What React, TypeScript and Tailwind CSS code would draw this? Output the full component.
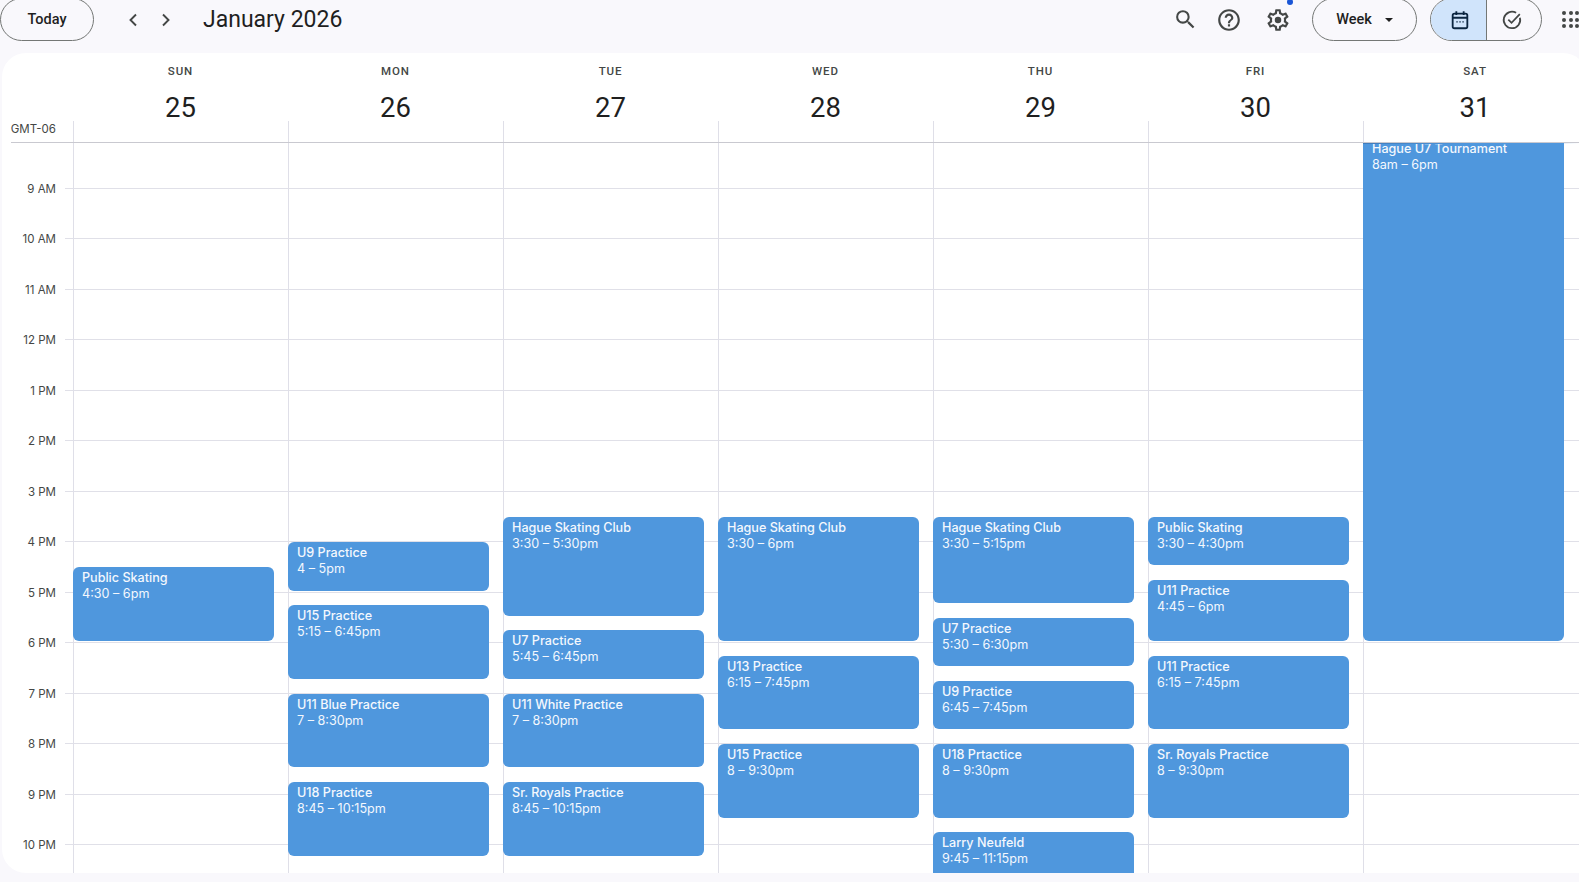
import React from "react";

const HOUR = 50.5;
const days = [
  ["SUN", "25"],
  ["MON", "26"],
  ["TUE", "27"],
  ["WED", "28"],
  ["THU", "29"],
  ["FRI", "30"],
  ["SAT", "31"],
];
const hourLabels = ["9 AM", "10 AM", "11 AM", "12 PM", "1 PM", "2 PM", "3 PM", "4 PM", "5 PM", "6 PM", "7 PM", "8 PM", "9 PM", "10 PM", "11 PM"];

type Ev = { d: number; s: number; e: number; t: string; w: string };
const events: Ev[] = [
  { d: 0, s: 16.5, e: 18, t: "Public Skating", w: "4:30 – 6pm" },
  { d: 1, s: 16, e: 17, t: "U9 Practice", w: "4 – 5pm" },
  { d: 1, s: 17.25, e: 18.75, t: "U15 Practice", w: "5:15 – 6:45pm" },
  { d: 1, s: 19, e: 20.5, t: "U11 Blue Practice", w: "7 – 8:30pm" },
  { d: 1, s: 20.75, e: 22.25, t: "U18 Practice", w: "8:45 – 10:15pm" },
  { d: 2, s: 15.5, e: 17.5, t: "Hague Skating Club", w: "3:30 – 5:30pm" },
  { d: 2, s: 17.75, e: 18.75, t: "U7 Practice", w: "5:45 – 6:45pm" },
  { d: 2, s: 19, e: 20.5, t: "U11 White Practice", w: "7 – 8:30pm" },
  { d: 2, s: 20.75, e: 22.25, t: "Sr. Royals Practice", w: "8:45 – 10:15pm" },
  { d: 3, s: 15.5, e: 18, t: "Hague Skating Club", w: "3:30 – 6pm" },
  { d: 3, s: 18.25, e: 19.75, t: "U13 Practice", w: "6:15 – 7:45pm" },
  { d: 3, s: 20, e: 21.5, t: "U15 Practice", w: "8 – 9:30pm" },
  { d: 4, s: 15.5, e: 17.25, t: "Hague Skating Club", w: "3:30 – 5:15pm" },
  { d: 4, s: 17.5, e: 18.5, t: "U7 Practice", w: "5:30 – 6:30pm" },
  { d: 4, s: 18.75, e: 19.75, t: "U9 Practice", w: "6:45 – 7:45pm" },
  { d: 4, s: 20, e: 21.5, t: "U18 Prtactice", w: "8 – 9:30pm" },
  { d: 4, s: 21.75, e: 23.25, t: "Larry Neufeld", w: "9:45 – 11:15pm" },
  { d: 5, s: 15.5, e: 16.5, t: "Public Skating", w: "3:30 – 4:30pm" },
  { d: 5, s: 16.75, e: 18, t: "U11 Practice", w: "4:45 – 6pm" },
  { d: 5, s: 18.25, e: 19.75, t: "U11 Practice", w: "6:15 – 7:45pm" },
  { d: 5, s: 20, e: 21.5, t: "Sr. Royals Practice", w: "8 – 9:30pm" },
  { d: 6, s: 8, e: 18, t: "Hague U7 Tournament", w: "8am – 6pm" },
];

const Mat = ({ d, size, className = "" }: { d: string; size: number; className?: string }) => (
  <svg width={size} height={size} viewBox="0 0 24 24" fill="currentColor" className={className}>
    <path d={d} />
  </svg>
);

const SEARCH = "M15.5 14h-.79l-.28-.27A6.471 6.471 0 0 0 16 9.5 6.5 6.5 0 1 0 9.5 16c1.61 0 3.09-.59 4.23-1.57l.27.28v.79l5 4.99L20.49 19l-4.99-5zm-6 0C7.01 14 5 11.99 5 9.5S7.01 5 9.5 5 14 7.01 14 9.5 11.99 14 9.5 14z";
const HELP = "M11 18h2v-2h-2v2zm1-16C6.48 2 2 6.48 2 12s4.48 10 10 10 10-4.48 10-10S17.52 2 12 2zm0 18c-4.41 0-8-3.59-8-8s3.59-8 8-8 8 3.59 8 8-3.59 8-8 8zm0-14c-2.21 0-4 1.79-4 4h2c0-1.1.9-2 2-2s2 .9 2 2c0 2-3 1.75-3 5h2c0-2.25 3-2.5 3-5 0-2.21-1.79-4-4-4z";
const GEAR = "M19.43 12.98c.04-.32.07-.64.07-.98 0-.34-.03-.66-.07-.98l2.11-1.65c.19-.15.24-.42.12-.64l-2-3.46c-.09-.16-.26-.25-.44-.25-.06 0-.12.01-.17.03l-2.49 1c-.52-.4-1.08-.73-1.69-.98l-.38-2.65C14.46 2.18 14.25 2 14 2h-4c-.25 0-.46.18-.49.42l-.38 2.65c-.61.25-1.17.59-1.69.98l-2.49-1c-.06-.02-.12-.03-.18-.03-.17 0-.34.09-.43.25l-2 3.46c-.13.22-.07.49.12.64l2.11 1.65c-.04.32-.07.65-.07.98 0 .33.03.66.07.98l-2.11 1.65c-.19.15-.24.42-.12.64l2 3.46c.09.16.26.25.44.25.06 0 .12-.01.17-.03l2.49-1c.52.4 1.08.73 1.69.98l.38 2.65c.03.24.24.42.49.42h4c.25 0 .46-.18.49-.42l.38-2.65c.61-.25 1.17-.59 1.69-.98l2.49 1c.06.02.12.03.18.03.17 0 .34-.09.43-.25l2-3.46c.12-.22.07-.49-.12-.64l-2.11-1.65zm-1.98-1.71c.04.31.05.52.05.73 0 .21-.02.43-.05.73l-.14 1.13.89.7 1.08.84-.7 1.21-1.27-.51-1.04-.42-.9.68c-.43.32-.84.56-1.25.73l-1.06.43-.16 1.13-.2 1.35h-1.4l-.19-1.35-.16-1.13-1.06-.43c-.43-.18-.83-.41-1.23-.71l-.91-.7-1.06.43-1.27.51-.7-1.21 1.08-.84.89-.7-.14-1.13c-.03-.31-.05-.54-.05-.74s.02-.43.05-.73l.14-1.13-.89-.7-1.08-.84.7-1.21 1.27.51 1.04.42.9-.68c.43-.32.84-.56 1.25-.73l1.06-.43.16-1.13.2-1.35h1.39l.19 1.35.16 1.13 1.06.43c.43.18.83.41 1.23.71l.91.7 1.06-.43 1.27-.51.7 1.21-1.07.85-.89.7.14 1.13zM12 9a3 3 0 1 0 0 6 3 3 0 0 0 0-6z";

const Chevron = ({ left }: { left?: boolean }) => (
  <svg width="12" height="14" viewBox="0 0 12 14" fill="none" stroke="#444746" strokeWidth="1.9">
    <path d={left ? "M9 1.5 3.5 7 9 12.5" : "M3 1.5 8.5 7 3 12.5"} />
  </svg>
);

export default function App() {
  return (
    <div className="flex h-screen w-screen flex-col overflow-hidden bg-[#f9f8fc] font-['Inter','Liberation_Sans',sans-serif]">
      <div className="flex h-[53px] shrink-0 items-start">
        <button className="-mt-[2px] flex h-[43px] w-[94px] items-center justify-center rounded-full border border-[#747775] text-[14.5px] font-medium text-[#1f1f1f] font-['Roboto',sans-serif]">
          Today
        </button>
        <div className="ml-[33px] flex h-[39px] items-center">
          <Chevron left />
          <span className="ml-[21px]">
            <Chevron />
          </span>
        </div>
        <div className="ml-[31px] flex h-[39px] items-center text-[23px] leading-none text-[#1f1f1f] font-['Roboto',sans-serif]">
          January 2026
        </div>
        <div className="ml-auto flex h-[39px] items-center text-[#444746]">
          <Mat d={SEARCH} size={25} />
          <Mat d={HELP} size={26} className="ml-[18px]" />
          <span className="relative ml-[23px] flex">
            <Mat d={GEAR} size={26} />
            <span className="absolute right-[-2px] top-[-8px] h-[6px] w-[6px] rounded-full bg-[#1a56d6]" />
          </span>
        </div>
        <button className="-mt-[2px] ml-[21px] flex h-[43px] w-[105px] items-center justify-center rounded-full border border-[#747775] text-[14.5px] font-medium text-[#1f1f1f] font-['Roboto',sans-serif]">
          Week
          <span className="ml-[13px] h-0 w-0 border-x-[4.5px] border-t-[4.5px] border-x-transparent border-t-[#1f1f1f]" />
        </button>
        <div className="-mt-[2px] ml-[13px] flex h-[43px] w-[112px] overflow-hidden rounded-full border border-[#747775]">
          <div className="flex w-[56px] items-center justify-center border-r border-[#747775] bg-[#d0e4fb] pl-[3px]">
            <svg width="22" height="22" viewBox="0 0 24 24" fill="none" stroke="#0b2540" strokeWidth="2">
              <rect x="4" y="5" width="16" height="16" rx="2" />
              <path d="M4 9.5h16M8 2.5v4M16 2.5v4" />
              <path d="M8 14h1.5M11.3 14h1.5M14.6 14h1.5" strokeWidth="1.5" />
            </svg>
          </div>
          <div className="flex flex-1 items-center justify-center pr-[4px] text-[#444746]">
            <svg width="22" height="22" viewBox="0 0 24 24" fill="none" stroke="currentColor" strokeWidth="1.9">
              <path d="M20.6 9.5A9 9 0 1 1 16.5 4.2" />
              <path d="m8 11.5 3.5 3.5 9-9.5" />
            </svg>
          </div>
        </div>
        <div className="ml-[20px] grid h-[39px] grid-cols-3 content-center gap-x-[2.5px] gap-y-[2.5px]">
          {Array.from({ length: 9 }).map((_, i) => (
            <span key={i} className="h-[4px] w-[4px] rounded-full bg-[#444746]" />
          ))}
        </div>
      </div>

      <div className="mb-[9px] ml-[2px] mr-[-8px] flex min-h-0 flex-1 flex-col overflow-hidden rounded-tl-[24px] rounded-tr-[24px] rounded-bl-[24px] bg-white">
        <div className="grid h-[90px] shrink-0 grid-cols-[71px_repeat(6,215px)_1fr]">
          <div className="flex flex-col justify-end">
            <div className="pb-[5px] pr-[17px] text-right text-[11.5px] leading-[16px] text-[#444746]">GMT-06</div>
            <div className="ml-[9px] border-b border-[#c9c9d0]" />
          </div>
          {days.map(([name, num]) => (
            <div key={name} className="flex flex-col items-center border-b border-[#c9c9d0] pt-[10px]">
              <div className="h-[16px] text-[11.5px] font-medium leading-[16px] tracking-[0.9px] text-[#444746] font-['Roboto',sans-serif]">{name}</div>
              <div className="mt-[15px] h-[27px] text-[27.5px] leading-[27px] text-[#1f1f1f] font-['Roboto',sans-serif]">{num}</div>
              <div className="h-[21px] self-start border-l border-[#dfdfe8]" />
            </div>
          ))}
        </div>

        <div className="grid min-h-0 flex-1 grid-cols-[71px_repeat(6,215px)_1fr] overflow-hidden">
          <div className="-mt-[5px]">
            <div className="relative h-0 pr-[17px] text-right">
              <span className="absolute right-[17px] top-[-7px] text-[11.5px] leading-[16px] text-[#444746]">8 AM</span>
            </div>
            {hourLabels.map((h) => (
              <div key={h} className="relative h-[50.5px]">
                <span className="absolute bottom-[-8px] right-[17px] text-[11.5px] leading-[16px] text-[#444746]">{h}</span>
                <span className="absolute bottom-0 right-0 w-[8px] border-b border-[#e0e0e8]" />
              </div>
            ))}
          </div>
          {days.map(([name], d) => (
            <div key={name} className="relative border-l border-[#dfdfe8]">
              <div className="-mt-[5px]">
                {hourLabels.map((h) => (
                  <div key={h} className="h-[50.5px] border-b border-[#e0e0e8]" />
                ))}
              </div>
              {events
                .filter((e) => e.d === d)
                .map((e) => (
                  <div
                    key={e.t + e.s}
                    className="absolute -left-px w-[201px] overflow-hidden rounded-[6px] bg-[#4f97dd] px-[9px] pt-[3px] text-[12.6px] leading-[16px] text-[#f4f8fd]"
                    style={{ top: (e.s - 8) * HOUR - 5, height: (e.e - e.s) * HOUR - 2 }}
                  >
                    <div className="font-medium">{e.t}</div>
                    <div>{e.w}</div>
                  </div>
                ))}
              {d === 6 && (
                <div className="absolute -left-px top-0 h-px w-[216px] bg-gradient-to-r from-[#3f7cbc] via-[#4f97dd] to-transparent" />
              )}
            </div>
          ))}
        </div>
      </div>
    </div>
  );
}
